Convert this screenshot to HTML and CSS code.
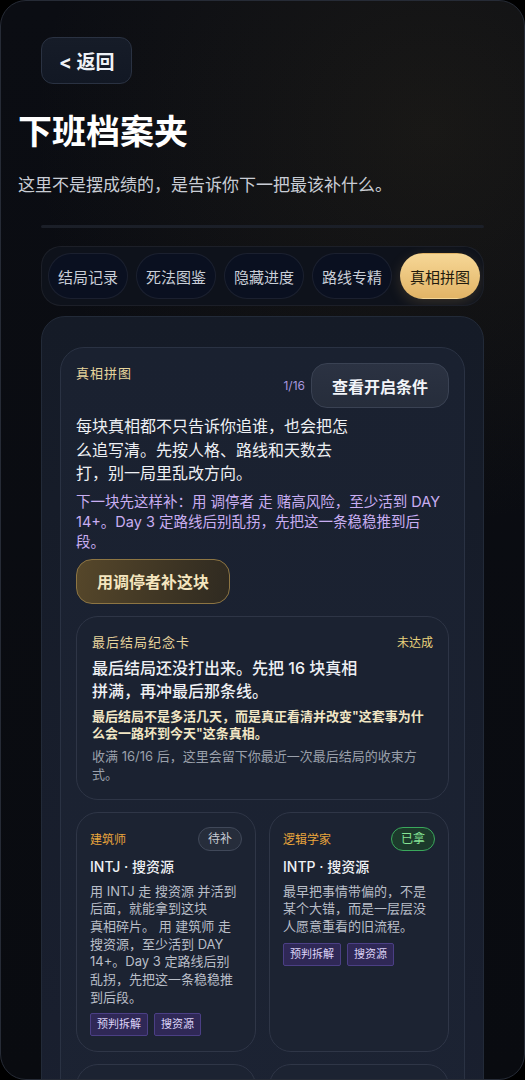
FILE: index.html
```html
<!DOCTYPE html>
<html lang="zh-CN">
<head>
  <meta charset="UTF-8" />
  <meta name="viewport" content="width=device-width, initial-scale=1.0"/>
  <title>下班档案夹</title>
  <link rel="stylesheet" href="styles.css">
</head>
<body>
  <div class="screen">
    <header class="top">
      <button class="back">&lt; 返回</button>
      <h1 class="title">下班档案夹</h1>
      <p class="lead">这里不是摆成绩的，是告诉你下一把最该补什么。</p>
    </header>

    <div class="content">
      <div class="rule"></div>

      <nav class="tabs">
        <button class="tab">结局记录</button>
        <button class="tab">死法图鉴</button>
        <button class="tab">隐藏进度</button>
        <button class="tab">路线专精</button>
        <button class="tab active">真相拼图</button>
      </nav>

      <section class="panel">
        <div class="truth">
          <div class="truth-head">
            <span class="kicker">真相拼图</span>
            <div class="truth-tools">
              <span class="count">1/16</span>
              <button class="ghost-btn">查看开启条件</button>
            </div>
          </div>

          <p class="truth-text">每块真相都不只告诉你追谁，也会把怎么追写清。先按人格、路线和天数去打，别一局里乱改方向。</p>
          <p class="hint">下一块先这样补：用 调停者 走 赌高风险，至少活到 DAY 14+。Day 3 定路线后别乱拐，先把这一条稳稳推到后段。</p>
          <button class="gold-btn">用调停者补这块</button>

          <div class="finale">
            <div class="finale-head">
              <span class="kicker">最后结局纪念卡</span>
              <span class="state">未达成</span>
            </div>
            <p class="finale-title">最后结局还没打出来。先把 16 块真相拼满，再冲最后那条线。</p>
            <p class="finale-note">最后结局不是多活几天，而是真正看清并改变"这套事为什么会一路坏到今天"这条真相。</p>
            <p class="finale-sub">收满 16/16 后，这里会留下你最近一次最后结局的收束方式。</p>
          </div>

          <div class="pieces">
            <div class="piece">
              <div class="piece-head">
                <span class="role">建筑师</span>
                <span class="badge">待补</span>
              </div>
              <div class="piece-title">INTJ · 搜资源</div>
              <p class="piece-text">用 INTJ 走 搜资源 并活到后面，就能拿到这块<span class="keep">真相碎片</span>。 用 建筑师 走 搜资源，至少活到 DAY 14+。Day 3 定路线后别乱拐，先把这一条稳稳推到后段。</p>
              <div class="tags">
                <span class="tag">预判拆解</span>
                <span class="tag">搜资源</span>
              </div>
            </div>

            <div class="piece">
              <div class="piece-head">
                <span class="role">逻辑学家</span>
                <span class="badge got">已拿</span>
              </div>
              <div class="piece-title">INTP · 搜资源</div>
              <p class="piece-text">最早把事情带偏的，不是某个大错，而是一层层没人愿意重看的旧流程。</p>
              <div class="tags">
                <span class="tag">预判拆解</span>
                <span class="tag">搜资源</span>
              </div>
            </div>

            <div class="piece">
              <div class="piece-head">
                <span class="role">指挥官</span>
                <span class="badge">待补</span>
              </div>
              <div class="piece-title">ENTJ · 赌高风险</div>
              <p class="piece-text">用 ENTJ 走 赌高风险 并活到后面，就能拿到这块真相碎片。</p>
            </div>

            <div class="piece">
              <div class="piece-head">
                <span class="role">辩论家</span>
                <span class="badge">待补</span>
              </div>
              <div class="piece-title">ENTP · 赌高风险</div>
              <p class="piece-text">用 ENTP 走 赌高风险 并活到后面，就能拿到这块真相碎片。</p>
            </div>
          </div>
        </div>
      </section>
    </div>
  </div>
</body>
</html>
```

FILE: styles.css
```css
* {
  box-sizing: border-box;
  font-family: "Inter", "Noto Sans CJK SC", sans-serif;
}

html, body {
  margin: 0;
  background: #000;
}

p {
  margin: 0;
}

button {
  font: inherit;
  cursor: pointer;
}

.screen {
  height: 100vh;
  overflow: hidden;
  border: 1px solid #262b36;
  border-radius: 26px;
  background:
    radial-gradient(circle at 82% 12%, rgba(110, 92, 45, 0.14), transparent 38%),
    linear-gradient(180deg, #0b0d13 0%, #090b10 100%);
}

/* header */

.top {
  padding: 36px 17px 0;
}

.back {
  margin-left: 23px;
  height: 47px;
  padding: 0 17px;
  border-radius: 12px;
  border: 1px solid #2a3242;
  background: linear-gradient(180deg, #161c28, #121824);
  color: #eef1f6;
  font-size: 19px;
  font-weight: 700;
}

.title {
  margin: 27px 0 0;
  font-size: 34px;
  line-height: 42px;
  font-weight: 700;
  color: #fff;
}

.lead {
  margin-top: 20px;
  font-size: 17px;
  line-height: 24px;
  color: #c9cdd5;
}

.content {
  padding: 0 40px;
}

.rule {
  margin-top: 28px;
  height: 3px;
  border-radius: 2px;
  background: #1b1f28;
}

/* tabs */

.tabs {
  margin-top: 18px;
  display: flex;
  gap: 8px;
  padding: 6px;
  border-radius: 20px;
  border: 1px solid rgba(255, 255, 255, 0.06);
  background: #0e121b;
  overflow: hidden;
}

.tab {
  flex: none;
  height: 46px;
  padding: 0 9px;
  border-radius: 23px;
  border: 1px solid rgba(255, 255, 255, 0.07);
  background: #0a1020;
  color: #c9ced7;
  font-size: 15px;
}

.tab.active {
  border-color: transparent;
  background: linear-gradient(180deg, #f6d796, #e2b466);
  color: #221b0e;
  box-shadow: 0 4px 14px rgba(226, 180, 102, 0.18);
}

/* panel */

.panel {
  margin-top: 10px;
  padding: 30px 18px 0;
  border-radius: 24px;
  border: 1px solid #222a38;
  background: linear-gradient(180deg, #151b27, #1a2030);
}

.truth {
  padding: 15px 15px 0;
  border-radius: 24px;
  border: 1px solid #2a3243;
  background: linear-gradient(180deg, #1a2130, #1c2333);
}

.truth-head {
  display: flex;
  justify-content: space-between;
  align-items: flex-start;
}

.kicker {
  font-size: 13px;
  line-height: 20px;
  letter-spacing: 1px;
  color: #e7d49c;
}

.truth-tools {
  display: flex;
  align-items: center;
  gap: 6px;
}

.count {
  font-size: 12px;
  color: #a897df;
}

.ghost-btn {
  height: 45px;
  padding: 0 20px;
  border-radius: 16px;
  border: 1px solid #3a4253;
  background: linear-gradient(180deg, #2b3242, #262d3b);
  color: #f2f4f8;
  font-size: 16px;
  font-weight: 700;
}

.truth-text {
  margin-top: 7px;
  max-width: 280px;
  font-size: 16px;
  line-height: 23.5px;
  color: #eef0f4;
}

.hint {
  margin-top: 6px;
  max-width: 369px;
  font-size: 14.5px;
  line-height: 20px;
  color: #c9aef2;
}

.gold-btn {
  margin-top: 7px;
  height: 45px;
  padding: 0 20px;
  border-radius: 16px;
  border: 1px solid #8d7543;
  background: linear-gradient(100deg, #56472a, #3a3223 70%, #2f2a21);
  color: #f5e6bf;
  font-size: 16px;
  font-weight: 700;
}

/* final ending card */

.finale {
  margin-top: 12px;
  padding: 15px 15px 16px;
  border-radius: 22px;
  border: 1px solid #2e3546;
  background: #1b2231;
}

.finale-head {
  display: flex;
  justify-content: space-between;
  align-items: center;
}

.state {
  font-size: 12px;
  color: #e9d27c;
}

.finale-title {
  margin-top: 5px;
  max-width: 280px;
  font-size: 16px;
  line-height: 23px;
  font-weight: 500;
  color: #eef0f4;
}

.finale-note {
  margin-top: 5px;
  font-size: 13px;
  line-height: 17px;
  font-weight: 600;
  color: #f1e6c4;
}

.finale-sub {
  margin-top: 5px;
  font-size: 13px;
  line-height: 18px;
  color: #9aa0ab;
}

/* piece grid */

.pieces {
  margin-top: 12px;
  display: grid;
  grid-template-columns: 1fr 1fr;
  gap: 12px 13px;
}

.piece {
  padding: 14px 13px 15px;
  border-radius: 22px;
  border: 1px solid #2f3647;
  background: #1c2332;
}

.piece-head {
  display: flex;
  justify-content: space-between;
  align-items: center;
}

.role {
  font-size: 12px;
  color: #e9a53c;
}

.badge {
  height: 24px;
  padding: 0 9px;
  border-radius: 12px;
  border: 1px solid #404859;
  background: #262d3b;
  color: #c7cbd3;
  font-size: 12px;
  line-height: 22px;
}

.badge.got {
  border-color: #3aa85c;
  background: #1c3a2b;
  color: #86e595;
}

.piece-title {
  margin-top: 6px;
  font-size: 14px;
  line-height: 20px;
  font-weight: 500;
  color: #eef0f4;
}

.piece-text {
  margin-top: 6px;
  font-size: 13px;
  line-height: 17.7px;
  color: #b9bec8;
}

.keep {
  white-space: nowrap;
}

.tags {
  margin-top: 7px;
  display: flex;
  gap: 6px;
}

.tag {
  height: 23px;
  padding: 0 6px;
  border-radius: 2px;
  border: 1px solid #4b3f85;
  background: #2f2856;
  color: #ddd3f7;
  font-size: 11px;
  line-height: 21px;
}
```
